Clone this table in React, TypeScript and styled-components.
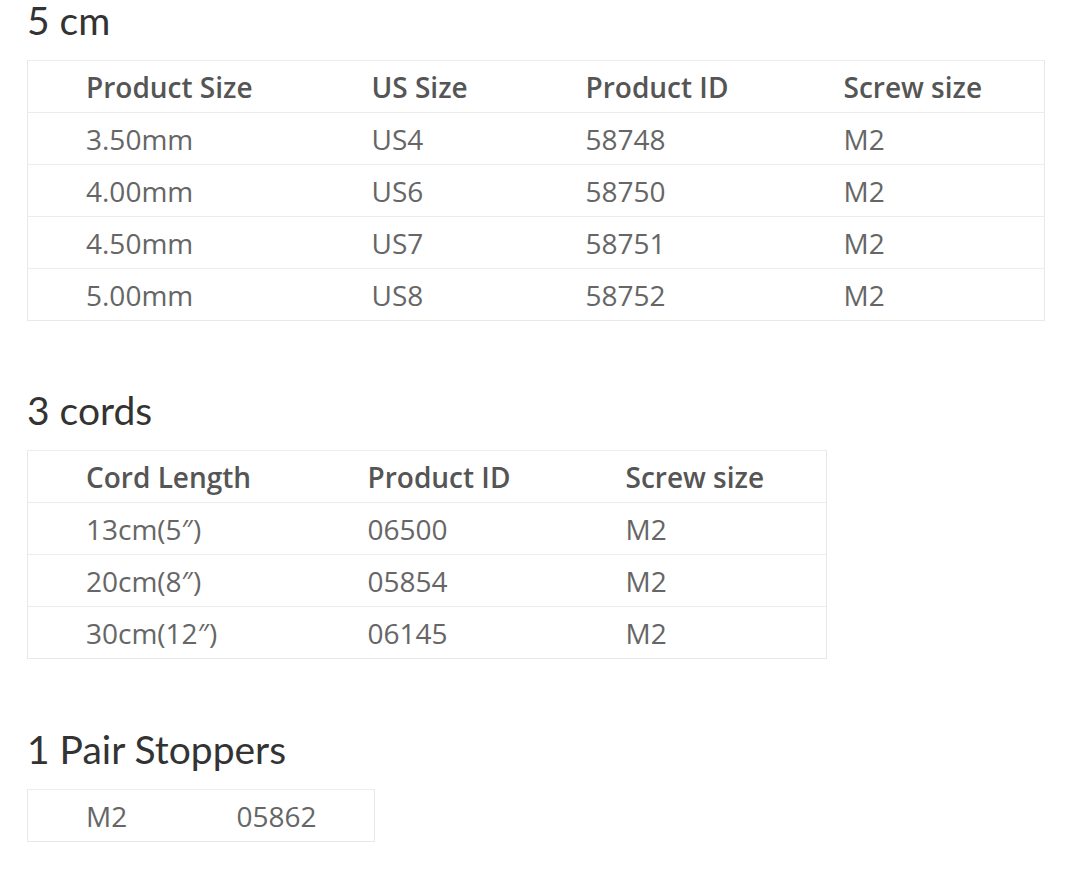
import React from "react";
import styled, { createGlobalStyle } from "styled-components";

const GlobalStyle = createGlobalStyle`
  html, body { margin: 0; padding: 0; background: #ffffff; }
  body { font-family: "Open Sans", "Lato", sans-serif; color: #555; }
`;

const Page = styled.div`
  padding: 1px 0 0 27px;
  display: flex;
  flex-direction: column;
`;

const Section = styled.section<{ $gapTop: number }>`
  display: flex;
  flex-direction: column;
  margin-top: ${(p) => p.$gapTop}px;
`;

const Heading = styled.h2`
  margin: 0;
  font-family: "Lato", "Open Sans", sans-serif;
  font-weight: 400;
  color: #333;
  font-size: 39px;
  line-height: 39px;
  height: 39px;
`;

const Table = styled.table<{ $width: number }>`
  width: ${(p) => p.$width}px;
  border-collapse: collapse;
  border: 1px solid #e8e8e8;
  table-layout: fixed;
  margin-top: 20px;
`;

const Row = styled.tr`
  height: 52px;
  border-top: 1px solid #ececec;
`;

const HeadCell = styled.th`
  text-align: left;
  font-family: "Open Sans", sans-serif;
  font-weight: 600;
  font-size: 28px;
  color: #555;
  padding: 0 0 0 58px;
  white-space: nowrap;
`;

const Cell = styled.td`
  text-align: left;
  font-family: "Open Sans", sans-serif;
  font-weight: 400;
  font-size: 28px;
  color: #666;
  padding: 0 0 0 58px;
  white-space: nowrap;
`;

type TableData = {
  widths: number[];
  head?: string[];
  rows: string[][];
};

const tables: { title: string; data: TableData; gap: number }[] = [
  {
    title: "5 cm",
    gap: 0,
    data: {
      widths: [286, 214, 258, 259],
      head: ["Product Size", "US Size", "Product ID", "Screw size"],
      rows: [
        ["3.50mm", "US4", "58748", "M2"],
        ["4.00mm", "US6", "58750", "M2"],
        ["4.50mm", "US7", "58751", "M2"],
        ["5.00mm", "US8", "58752", "M2"],
      ],
    },
  },
  {
    title: "3 cords",
    gap: 70,
    data: {
      widths: [282, 258, 259],
      head: ["Cord Length", "Product ID", "Screw size"],
      rows: [
        ["13cm(5″)", "06500", "M2"],
        ["20cm(8″)", "05854", "M2"],
        ["30cm(12″)", "06145", "M2"],
      ],
    },
  },
  {
    title: "1 Pair Stoppers",
    gap: 71,
    data: {
      widths: [151, 196],
      rows: [["M2", "05862"]],
    },
  },
];

export default function App() {
  return (
    <>
      <GlobalStyle />
      <Page>
        {tables.map((t) => (
          <Section key={t.title} $gapTop={t.gap}>
            <Heading>{t.title}</Heading>
            <Table $width={t.data.widths.reduce((a, b) => a + b, 0)}>
              <colgroup>
                {t.data.widths.map((w, i) => (
                  <col key={i} style={{ width: w }} />
                ))}
              </colgroup>
              <tbody>
                {t.data.head && (
                  <Row>
                    {t.data.head.map((h) => (
                      <HeadCell key={h}>{h}</HeadCell>
                    ))}
                  </Row>
                )}
                {t.data.rows.map((r, i) => (
                  <Row key={i}>
                    {r.map((c, j) => (
                      <Cell key={j}>{c}</Cell>
                    ))}
                  </Row>
                ))}
              </tbody>
            </Table>
          </Section>
        ))}
      </Page>
    </>
  );
}
